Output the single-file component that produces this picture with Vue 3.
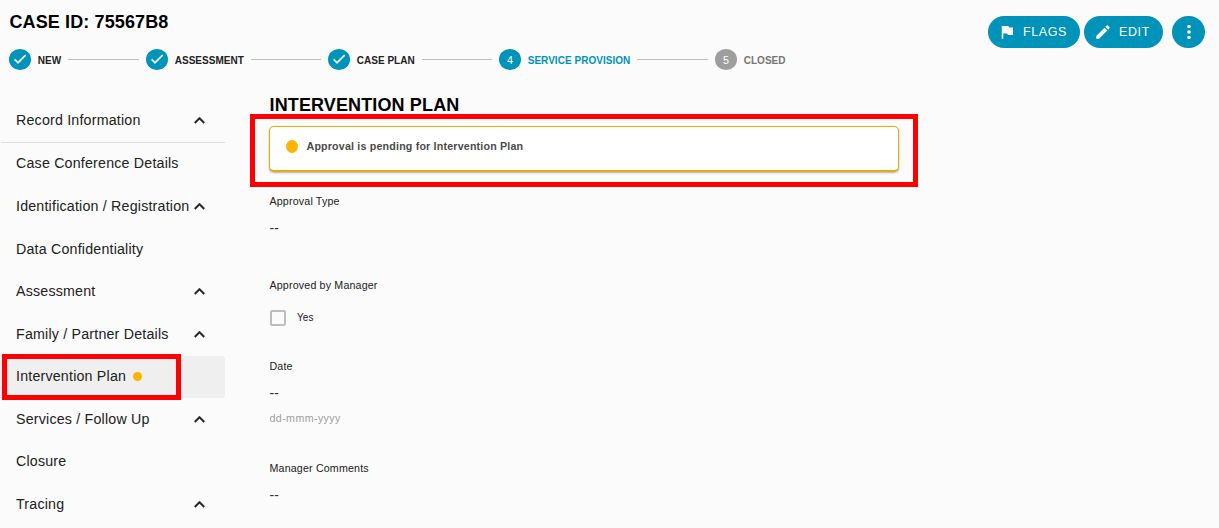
<script setup>
const steps = [
  { label: 'NEW', state: 'done', width: 137 },
  { label: 'ASSESSMENT', state: 'done', width: 182 },
  { label: 'CASE PLAN', state: 'done', width: 171 },
  { label: 'SERVICE PROVISION', state: 'active', number: 4, width: 216 },
  { label: 'CLOSED', state: 'todo', number: 5, width: 80 },
]
const items = [
  { label: 'Record Information', group: true, divided: true },
  { label: 'Case Conference Details' },
  { label: 'Identification / Registration', group: true },
  { label: 'Data Confidentiality' },
  { label: 'Assessment', group: true },
  { label: 'Family / Partner Details', group: true },
  { label: 'Intervention Plan', selected: true },
  { label: 'Services / Follow Up', group: true },
  { label: 'Closure' },
  { label: 'Tracing', group: true },
]
</script>

<template>
  <div class="page">
    <header class="header">
      <div class="heading">
        <h1>CASE ID: 75567B8</h1>
        <ol class="stepper">
          <li v-for="s in steps" :key="s.label" :class="['step', s.state]" :style="{ width: s.width + 'px' }">
            <span class="badge">
              <svg v-if="s.state === 'done'" class="tick" viewBox="0 0 24 24" width="16" height="16"><path d="M9 16.17 4.83 12l-1.42 1.41L9 19 21 7l-1.41-1.41z" /></svg>
              <template v-else>{{ s.number }}</template>
            </span>
            <span class="step-label">{{ s.label }}</span>
            <span v-if="s.label !== 'CLOSED'" class="line"></span>
          </li>
        </ol>
      </div>
      <div class="actions">
        <button class="btn flags">
          <svg viewBox="0 0 24 24" width="18" height="18"><path d="M14.4 6 14 4H5v17h2v-7h5.6l.4 2h7V6z" /></svg>
          <span>FLAGS</span>
        </button>
        <button class="btn edit">
          <svg viewBox="0 0 24 24" width="18" height="18"><path d="M3 17.25V21h3.75L17.81 9.94l-3.75-3.75zM20.71 7.04a1 1 0 0 0 0-1.41l-2.34-2.34a1 1 0 0 0-1.41 0l-1.83 1.83 3.75 3.75z" /></svg>
          <span>EDIT</span>
        </button>
        <button class="btn more" aria-label="More">
          <svg viewBox="0 0 24 24" width="22" height="22"><path d="M12 8a2 2 0 1 0 0-4 2 2 0 0 0 0 4zm0 2a2 2 0 1 0 0 4 2 2 0 0 0 0-4zm0 6a2 2 0 1 0 0 4 2 2 0 0 0 0-4z" /></svg>
        </button>
      </div>
    </header>

    <div class="body">
      <nav class="sidebar">
        <div v-for="i in items" :key="i.label" :class="['item', { divided: i.divided, selected: i.selected }]">
          <span class="item-label">{{ i.label }}</span>
          <span v-if="i.selected" class="dot"></span>
          <svg v-if="i.group" class="chevron" viewBox="0 0 24 24" width="21" height="21"><path d="M7.41 15.41 12 10.83l4.59 4.58L18 14l-6-6-6 6z" /></svg>
          <span v-if="i.selected" class="mark"></span>
        </div>
      </nav>

      <main class="content">
        <h2>INTERVENTION PLAN</h2>
        <div class="alert">
          <span class="alert-dot"></span>
          <span class="alert-text">Approval is pending for Intervention Plan</span>
          <span class="mark"></span>
        </div>
        <div class="field type">
          <div class="label">Approval Type</div>
          <div class="value">--</div>
        </div>
        <div class="field manager">
          <div class="label">Approved by Manager</div>
          <div class="check"><span class="box"></span><span>Yes</span></div>
        </div>
        <div class="field date">
          <div class="label">Date</div>
          <div class="value">--</div>
          <div class="hint">dd-mmm-yyyy</div>
        </div>
        <div class="field">
          <div class="label">Manager Comments</div>
          <div class="value">--</div>
        </div>
      </main>
    </div>
  </div>
</template>

<style>
body { margin: 0; background: #fbfbfb; }
</style>

<style scoped>
.page {
  width: 1219px;
  height: 528px;
  overflow: hidden;
  background: #fbfbfb;
  color: #212121;
  font-family: "Liberation Sans", Arial, sans-serif;
}
.page * { box-sizing: border-box; }
svg { display: block; fill: currentColor; flex: none; }
.header { display: flex; justify-content: space-between; height: 94px; padding: 0 14px 0 9px; }
h1, h2 { margin: 0; font-size: 18px; line-height: 20px; font-weight: 700; color: #000; white-space: nowrap; }
h1 { padding: 12px 0 0 0.5px; letter-spacing: 0.12px; }
h2 { padding: 1px 0 0 0.5px; letter-spacing: 0.13px; }
.stepper { display: flex; margin: 16.5px 0 0; padding: 0; list-style: none; }
.step { display: flex; align-items: center; height: 22px; flex: none; }
.badge {
  display: flex; align-items: center; justify-content: center; flex: none;
  width: 22px; height: 21.5px; border-radius: 50%;
  background: #0093ba; color: #fff; font-size: 10.67px;
}
.tick { margin-bottom: 1px; stroke: currentColor; stroke-width: 0.6; }
.todo .badge { background: #9e9e9e; }
.step-label { margin: 2px 7px 0 6.7px; font-size: 10px; line-height: 12px; font-weight: 700; white-space: nowrap; letter-spacing: 0.03px; }
.active .step-label { color: #0093ba; }
.todo .step-label { color: #757575; }
.line { flex: 1; height: 1px; background: #bdbdbd; margin: 0 7px 0 0; }
.actions { display: flex; padding-top: 16px; }
.btn {
  display: flex; align-items: center; height: 32px; padding: 0; border: 0; border-radius: 16px;
  background: #0093ba; color: #fff; font-family: inherit; font-size: 12.5px; letter-spacing: 0.6px;
}
.flags { width: 92px; padding-left: 10px; gap: 7px; margin-right: 4px; }
.edit { width: 79px; padding-left: 10px; gap: 7px; margin-right: 9px; }
.more { width: 33px; justify-content: center; }
.body { display: flex; }
.sidebar { width: 225px; padding-top: 5px; flex: none; }
.item {
  position: relative; display: flex; align-items: center; height: 42.6px;
  padding-left: 16px; font-size: 14.22px; letter-spacing: 0.2px; white-space: nowrap;
}
.item:nth-child(4) .item-label { margin-bottom: 1px; }
.item-label { margin-bottom: 2px; }
.item.divided { height: 44px; border-bottom: 1px solid #dcdcdc; margin-left: 1px; padding-left: 15px; }
.item.selected { background: #efefef; border-radius: 0 4px 4px 0; height: 42px; margin-bottom: 0.6px; }
.chevron { margin: 0 15px 0.8px auto; stroke: currentColor; stroke-width: 0.4; }
.dot { width: 9px; height: 9px; margin: 0 0 1.5px 7px; border-radius: 50%; background: #fdb400; }
.mark { position: absolute; border: 5px solid #f00; }
.item .mark { left: 2px; top: -2px; width: 179px; height: 46px; }
.content { padding-left: 44px; }
.alert {
  position: relative; display: flex; align-items: center; width: 630px; height: 46px; margin-top: 11px;
  padding: 0 16px 4px; border: 1px solid #e9ad0b; border-bottom-width: 2px; border-radius: 5px;
  background: #fff; box-shadow: 0 1px 2px rgba(0, 0, 0, 0.3);
  color: #4a4a4a; font-size: 10.67px; font-weight: 700; letter-spacing: 0.19px;
}
.alert-dot { width: 12px; height: 13px; margin-right: 8.5px; border-radius: 50%; background: #fdb400; }
.alert-text { margin-bottom: 2px; }
.alert .mark { left: -20px; top: -13px; width: 668px; height: 73px; }
.field { padding-left: 0.5px; font-size: 10.67px; line-height: 14px; letter-spacing: 0.17px; }
.label { height: 14px; }
.value { margin-top: 12px; height: 16px; line-height: 16px; font-size: 14px; color: #333; }
.type { margin-top: 22px; height: 84px; }
.manager { height: 81px; }
.date { height: 102px; }
.check { display: flex; align-items: center; margin-top: 18px; height: 16px; font-size: 10px; letter-spacing: 0.1px; }
.box { width: 16px; height: 16px; margin: 0 11px 0 0.5px; border: 2px solid #bdbdbd; border-radius: 2px; }
.hint { margin-top: 10px; color: #9e9e9e; letter-spacing: 0.4px; }
</style>
